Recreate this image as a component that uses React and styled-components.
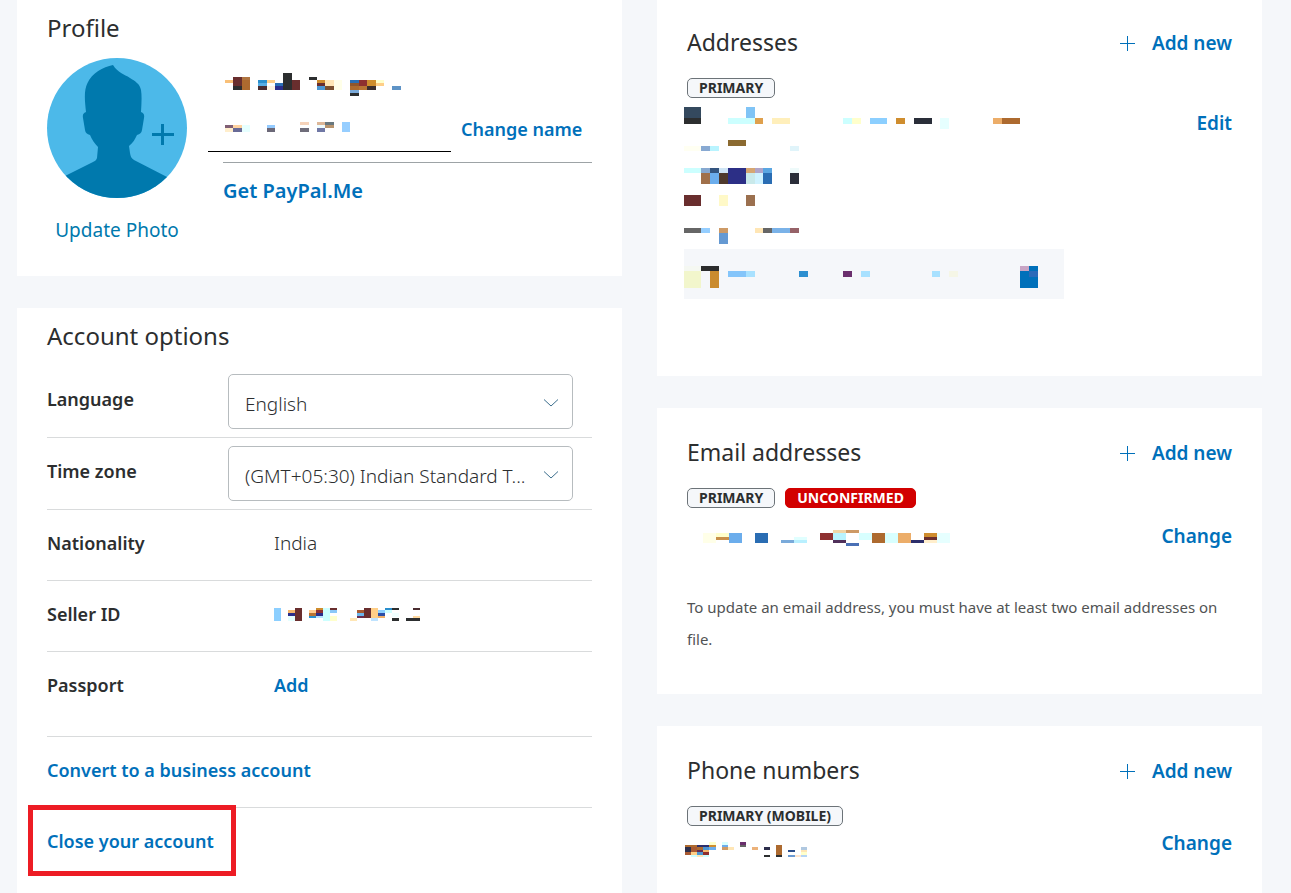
import * as React from "react";
import styled, { createGlobalStyle } from "styled-components";

// Each cell is [x, y, width, height, color]
const nameCells = [
  [0, 7, 8, 3, "#f9c078"],
  [8, 4, 9, 9, "#692e2e"],
  [8, 13, 9, 4, "#2c2e2f"],
  [17, 4, 8, 3, "#b07540"],
  [17, 7, 8, 10, "#ad6a2f"],
  [33, 7, 9, 3, "#2a8fcd"],
  [33, 10, 9, 3, "#58aee4"],
  [33, 13, 9, 4, "#4a2c30"],
  [42, 7, 8, 3, "#ffcf88"],
  [42, 13, 8, 4, "#fff4e2"],
  [50, 10, 8, 3, "#2b6eb5"],
  [50, 13, 8, 4, "#2c2e8b"],
  [58, 0, 9, 17, "#2c2e2f"],
  [67, 7, 8, 10, "#692e2e"],
  [84, 4, 8, 3, "#2c2e2f"],
  [92, 7, 8, 3, "#cf8d2e"],
  [92, 10, 8, 3, "#692e2e"],
  [92, 13, 8, 4, "#4b96d2"],
  [100, 7, 9, 6, "#ffe6b5"],
  [100, 13, 9, 4, "#7a502f"],
  [109, 7, 8, 10, "#ffffe8"],
  [125, 7, 9, 3, "#2a6eb4"],
  [125, 10, 9, 3, "#8e562e"],
  [125, 13, 9, 4, "#ad6a2f"],
  [125, 17, 9, 3, "#7aaada"],
  [125, 20, 9, 3, "#2c2e2f"],
  [134, 7, 8, 6, "#8e2f2f"],
  [134, 13, 8, 4, "#b87333"],
  [142, 7, 9, 6, "#cf8d2e"],
  [142, 13, 9, 4, "#3b2d2e"],
  [151, 7, 8, 3, "#ffffcc"],
  [151, 10, 8, 3, "#ffcf88"],
  [167, 13, 9, 4, "#5e93c6"],
];

const businessCells = [
  [0, 3, 8, 3, "#805f75"],
  [0, 6, 8, 4, "#ffeecc"],
  [8, 3, 9, 3, "#ffd29f"],
  [8, 6, 9, 4, "#686a96"],
  [17, 3, 8, 7, "#e6ffff"],
  [42, 3, 8, 3, "#94cbff"],
  [42, 6, 8, 4, "#6b6878"],
  [75, 0, 9, 3, "#f6d3ba"],
  [75, 6, 9, 4, "#6f6d7a"],
  [92, 0, 8, 3, "#ddb798"],
  [92, 3, 8, 3, "#eefcff"],
  [92, 6, 8, 4, "#7078a5"],
  [100, 0, 9, 3, "#68777e"],
  [100, 3, 9, 3, "#b8946f"],
  [117, 0, 8, 10, "#96ceff"],
];

const sellerCells = [
  [0, 0, 7, 13, "#8ccfff"],
  [14, 2, 7, 3, "#f4b66c"],
  [14, 5, 7, 3, "#2c2e8b"],
  [14, 8, 7, 5, "#e6ffff"],
  [21, 0, 7, 13, "#692e2e"],
  [35, 2, 7, 3, "#ffcc90"],
  [35, 5, 7, 3, "#b87333"],
  [35, 8, 7, 2, "#2a8fcd"],
  [42, 0, 7, 2, "#cf8d2e"],
  [42, 2, 7, 3, "#8e2f2f"],
  [42, 5, 7, 3, "#2c2e8b"],
  [42, 8, 7, 2, "#b5e3ff"],
  [49, 0, 7, 13, "#ccffff"],
  [56, 0, 7, 2, "#692e2e"],
  [56, 2, 7, 3, "#8cc8f8"],
  [56, 8, 7, 5, "#ffffcc"],
  [76, 10, 7, 3, "#ffe6b5"],
  [83, 2, 7, 3, "#a85a32"],
  [83, 5, 7, 3, "#6bb5ec"],
  [83, 8, 7, 2, "#692e4e"],
  [90, 0, 7, 10, "#692e2e"],
  [97, 0, 7, 10, "#ffcf88"],
  [97, 10, 7, 3, "#bfe3ff"],
  [104, 2, 7, 3, "#8ccfff"],
  [104, 5, 7, 3, "#2c4ea6"],
  [104, 8, 7, 2, "#f0b06a"],
  [111, 0, 7, 2, "#2a8fcd"],
  [111, 2, 7, 3, "#cfffff"],
  [118, 0, 7, 2, "#2c2e2f"],
  [118, 5, 7, 4, "#f0ffff"],
  [118, 10, 7, 3, "#2c2e2f"],
  [132, 10, 14, 3, "#2c2e2f"],
  [139, 0, 7, 2, "#4a2c30"],
  [139, 8, 7, 2, "#ffd9a0"],
];

const addressCells = [
  [0, 0, 17, 11, "#34495e"],
  [0, 11, 17, 6, "#2c2e2f"],
  [62, 0, 9, 11, "#80c4f6"],
  [44, 11, 27, 6, "#ccffff"],
  [71, 11, 8, 6, "#dfa04d"],
  [88, 11, 18, 6, "#ffefbb"],
  [159, 11, 9, 6, "#ccffff"],
  [168, 11, 9, 6, "#ffffcc"],
  [186, 11, 17, 6, "#8ccfff"],
  [212, 11, 9, 6, "#cf8d2e"],
  [230, 11, 18, 6, "#2a2e39"],
  [256, 11, 9, 11, "#e6ffff"],
  [309, 11, 9, 6, "#ecad69"],
  [318, 11, 18, 6, "#ad6a2f"],
  [44, 33, 18, 6, "#8b6a31"],
  [0, 39, 17, 5, "#fffff2"],
  [17, 39, 9, 5, "#88a9d2"],
  [26, 39, 9, 5, "#b9f4ff"],
  [106, 39, 9, 5, "#e0f4fa"],
  [0, 61, 17, 5, "#ccffff"],
  [17, 61, 9, 5, "#86a8d0"],
  [26, 61, 9, 5, "#34557f"],
  [35, 61, 9, 5, "#cfe5f5"],
  [44, 61, 18, 16, "#2c2f86"],
  [62, 61, 9, 5, "#d6a672"],
  [71, 61, 8, 5, "#b0a4c8"],
  [79, 61, 9, 5, "#5aa6e2"],
  [106, 61, 9, 5, "#eefafa"],
  [17, 66, 9, 11, "#a0704a"],
  [26, 66, 9, 11, "#6badec"],
  [35, 66, 9, 11, "#4f3a2d"],
  [62, 66, 9, 11, "#c9e9ea"],
  [71, 66, 8, 11, "#cff2ff"],
  [79, 66, 9, 11, "#2a6db3"],
  [106, 66, 9, 11, "#2a2e39"],
  [0, 88, 17, 11, "#692e2e"],
  [35, 88, 9, 11, "#fff9c8"],
  [62, 88, 9, 11, "#9b704f"],
  [0, 121, 17, 5, "#666666"],
  [17, 121, 9, 5, "#95ceff"],
  [35, 121, 9, 5, "#cd9a66"],
  [35, 126, 9, 11, "#6599d2"],
  [71, 121, 8, 5, "#ffe6b5"],
  [79, 121, 9, 5, "#666666"],
  [88, 121, 18, 5, "#7ab2e8"],
  [106, 121, 9, 5, "#966268"],
];

const addressNoteCells = [
  [0, 17, 17, 5, "#f5f8f2"],
  [0, 22, 17, 17, "#f2f6cc"],
  [17, 17, 18, 5, "#2b2c2d"],
  [26, 22, 9, 17, "#ca8b2e"],
  [44, 22, 18, 6, "#84c5fa"],
  [62, 22, 9, 6, "#a8e1ff"],
  [115, 22, 9, 6, "#2d8fd0"],
  [159, 22, 9, 6, "#6a2f6d"],
  [177, 22, 9, 6, "#a8e1ff"],
  [248, 22, 8, 6, "#a8e1ff"],
  [265, 22, 9, 6, "#f5f6e6"],
  [336, 17, 18, 22, "#0070ba"],
  [336, 17, 9, 5, "#c9a5c5"],
  [345, 22, 9, 6, "#2b6ab9"],
];

const emailCells = [
  [0, 3, 13, 10, "#ffffe8"],
  [13, 3, 13, 4, "#ffffcc"],
  [13, 7, 13, 3, "#c8904a"],
  [26, 3, 13, 10, "#6badec"],
  [52, 3, 13, 10, "#2a6db3"],
  [78, 10, 13, 3, "#7aaada"],
  [91, 7, 13, 3, "#e0ffff"],
  [91, 10, 13, 3, "#b9f0ff"],
  [117, 3, 13, 7, "#8e3030"],
  [130, 0, 13, 3, "#f0d6a8"],
  [130, 3, 13, 7, "#b9f4ff"],
  [130, 10, 13, 3, "#50305a"],
  [143, 0, 13, 3, "#cd9a66"],
  [143, 13, 13, 3, "#4a70b5"],
  [156, 3, 13, 7, "#d8ffff"],
  [169, 3, 13, 10, "#ad6a2f"],
  [182, 3, 13, 10, "#d8ffff"],
  [195, 3, 13, 10, "#ecad69"],
  [208, 10, 13, 3, "#2c2e6b"],
  [221, 3, 13, 4, "#cf8d2e"],
  [221, 7, 13, 3, "#692e2e"],
  [221, 10, 13, 3, "#ffeecc"],
  [234, 3, 13, 10, "#e6ffff"],
];

const phoneCells = [
  [0, 3, 12, 2, "#ad6a2f"],
  [0, 5, 6, 5, "#2c2e4b"],
  [6, 5, 6, 5, "#a85a32"],
  [0, 10, 6, 3, "#a85a32"],
  [6, 10, 6, 3, "#ffcf88"],
  [6, 13, 6, 2, "#ccffff"],
  [12, 3, 12, 2, "#2c2e6b"],
  [12, 5, 6, 3, "#ad6a2f"],
  [12, 8, 6, 2, "#692e4e"],
  [12, 10, 6, 3, "#4b96d2"],
  [12, 13, 6, 2, "#ffe6b5"],
  [18, 5, 6, 3, "#4b96d2"],
  [18, 8, 6, 2, "#f4b66c"],
  [18, 10, 6, 3, "#8e2f2f"],
  [18, 13, 6, 2, "#ccffff"],
  [24, 0, 7, 3, "#ffffcc"],
  [24, 3, 7, 2, "#cf8d2e"],
  [24, 5, 7, 3, "#6badec"],
  [37, 0, 6, 3, "#d8ffff"],
  [37, 3, 6, 2, "#6badec"],
  [37, 5, 6, 3, "#cd9a66"],
  [43, 5, 6, 3, "#ffe6b5"],
  [55, 0, 6, 3, "#6a2f6d"],
  [55, 3, 6, 2, "#666666"],
  [67, 5, 6, 3, "#ecb27a"],
  [79, 5, 6, 3, "#2c2e4b"],
  [79, 13, 6, 2, "#2c2e2f"],
  [91, 3, 6, 10, "#ad6a2f"],
  [91, 13, 6, 2, "#2c2e2f"],
  [103, 8, 7, 2, "#2c4e8b"],
  [103, 13, 7, 2, "#6b9ad2"],
  [110, 13, 6, 2, "#ffe6cf"],
  [116, 5, 6, 3, "#b0c8e0"],
  [116, 8, 6, 2, "#ffe6b5"],
  [116, 10, 6, 3, "#ffffcc"],
  [116, 13, 6, 2, "#b5d5f5"],
];

const Mosaic = ({ cells, width, height }) => (
  <MosaicSvg
    width={width}
    height={height}
    viewBox={`0 0 ${width} ${height}`}
    shapeRendering="crispEdges"
    aria-hidden="true"
  >
    {cells.map(([x, y, w, h, fill], i) => (
      <rect key={i} x={x} y={y} width={w} height={h} fill={fill} />
    ))}
  </MosaicSvg>
);

const Avatar = () => (
  <AvatarSvg width="140" height="140" viewBox="0 0 140 140" aria-hidden="true">
    <defs>
      <clipPath id="avatarClip">
        <circle cx="70" cy="70" r="70" />
      </clipPath>
    </defs>
    <circle cx="70" cy="70" r="70" fill="#4cb9e9" />
    <path
      clipPath="url(#avatarClip)"
      fill="#0079ad"
      d="M66 7C56 9 45 15 40.500 25C37 32 37.500 41 39 54C36 55 35.500 57 36 60L38 72C38.500 75 40 76 43 77C45 82 48 86 51 89L50 100C49.500 102 48 103 46 104L18 118V142H122V120L87 102C84 100 83.500 98 83 95L82 88C86 85 88 81 90 77C93 76 94.500 75 95 72L97 60C97.500 57 97 55 94 54C94.500 46 95 38 94 32C93 26 88 23 83 20C77 16 71 15 66 7Z"
    />
    <path d="M105 76.500H127M115.500 66V87" stroke="#0079ad" strokeWidth="3" />
  </AvatarSvg>
);

const AddNew = () => (
  <AddLink href="#add">
    <svg width="15" height="15" viewBox="0 0 15 15" aria-hidden="true">
      <path
        d="M0 7.500H15M7.500 0V15"
        stroke="#0070ba"
        fill="none"
        shapeRendering="crispEdges"
      />
    </svg>
    Add new
  </AddLink>
);

const Dropdown = ({ id, children }) => (
  <SelectWrapper>
    <Select id={id}>{children}</Select>
    <Chevron width="16" height="10" viewBox="0 0 16 10" aria-hidden="true">
      <path d="M1 1.500L8 8L15 1.500" stroke="#3d6f8e" fill="none" />
    </Chevron>
  </SelectWrapper>
);

const App = () => {
  return (
    <>
      <GlobalStyle />
      <Page>
        <Column>
          <Card $bottom={30}>
            <Header>
              <Title>Profile</Title>
            </Header>
            <ProfileBody>
              <PhotoLink href="#photo">
                <Avatar />
                Update Photo
              </PhotoLink>
              <Details>
                <NameRow>
                  <NameField>
                    <Mosaic cells={nameCells} width={176} height={23} />
                    <Mosaic cells={businessCells} width={125} height={10} />
                  </NameField>
                  <NameLink href="#name">Change name</NameLink>
                </NameRow>
                <PayPalMe>
                  <PayPalMeLink href="#paypalme">Get PayPal.Me</PayPalMeLink>
                </PayPalMe>
              </Details>
            </ProfileBody>
          </Card>

          <Card>
            <Header>
              <Title>Account options</Title>
            </Header>
            <Row>
              <Label htmlFor="language">Language</Label>
              <Dropdown id="language">
                <option>English</option>
              </Dropdown>
            </Row>
            <Row>
              <Label htmlFor="timezone">Time zone</Label>
              <Dropdown id="timezone">
                <option>(GMT+05:30) Indian Standard T...</option>
              </Dropdown>
            </Row>
            <Row>
              <Label as="span">Nationality</Label>
              <Value>India</Value>
            </Row>
            <Row>
              <Label as="span">Seller ID</Label>
              <Value>
                <Mosaic cells={sellerCells} width={146} height={13} />
              </Value>
            </Row>
            <Row $tall>
              <Label as="span">Passport</Label>
              <Value>
                <RowLink href="#passport">Add</RowLink>
              </Value>
            </Row>
            <Row>
              <RowLink href="#convert">Convert to a business account</RowLink>
            </Row>
            <Row>
              <CloseLink href="#close">Close your account</CloseLink>
            </Row>
          </Card>
        </Column>

        <Column>
          <Card $bottom={77}>
            <SectionHeader $top={26}>
              <SectionTitle>Addresses</SectionTitle>
              <AddNew />
            </SectionHeader>
            <Badge>PRIMARY</Badge>
            <Entry $top={9}>
              <Address>
                <Mosaic cells={addressCells} width={336} height={142} />
                <AddressNote>
                  <Mosaic cells={addressNoteCells} width={354} height={50} />
                </AddressNote>
              </Address>
              <Link href="#edit">Edit</Link>
            </Entry>
          </Card>

          <Card $bottom={39}>
            <SectionHeader>
              <SectionTitle>Email addresses</SectionTitle>
              <AddNew />
            </SectionHeader>
            <Badges>
              <Badge>PRIMARY</Badge>
              <Badge $alert>UNCONFIRMED</Badge>
            </Badges>
            <Entry $top={12}>
              <EmailValue>
                <Mosaic cells={emailCells} width={247} height={16} />
              </EmailValue>
              <Link href="#email">Change</Link>
            </Entry>
            <Note>
              To update an email address, you must have at least two email
              addresses on file.
            </Note>
          </Card>

          <Card>
            <SectionHeader>
              <SectionTitle>Phone numbers</SectionTitle>
              <AddNew />
            </SectionHeader>
            <Badge>PRIMARY (MOBILE)</Badge>
            <Entry $top={1}>
              <PhoneValue>
                <Mosaic cells={phoneCells} width={122} height={15} />
              </PhoneValue>
              <Link href="#phone">Change</Link>
            </Entry>
          </Card>
        </Column>
      </Page>
    </>
  );
};

const GlobalStyle = createGlobalStyle`
  * {
    box-sizing: border-box;
  }

  body {
    margin: 0;
    background-color: #f5f7fa;
    color: #2c2e2f;
    font-family: "Noto Sans", "Open Sans", sans-serif;
    font-size: 18px;
  }
`;

const Page = styled.main`
  display: grid;
  grid-template-columns: 1fr 1fr;
  column-gap: 35px;
  min-height: 100vh;
  padding: 0 29px 0 17px;
`;

const Column = styled.div`
  display: flex;
  flex-direction: column;
  gap: 32px;
  min-width: 0;
`;

const Card = styled.section`
  padding: 0 30px ${(props) => props.$bottom || 0}px;
  background-color: white;

  &:last-child {
    flex: 1;
  }
`;

const Header = styled.div`
  padding: 12px 0 14px;
`;

const SectionHeader = styled.div`
  display: flex;
  justify-content: space-between;
  align-items: flex-start;
  padding: ${(props) => props.$top || 28}px 0 18px;
`;

const Title = styled.h2`
  margin: 0;
  font-size: 24px;
  font-weight: 400;
  line-height: 32px;
`;

const SectionTitle = styled(Title)`
  font-size: 23px;
`;

const Link = styled.a`
  color: #0070ba;
  font-size: 19px;
  font-weight: 600;
  line-height: 32px;
  text-decoration: none;
`;

const AddLink = styled(Link)`
  display: flex;
  align-items: center;
  gap: 17px;
  line-height: 34px;
`;

const RowLink = styled(Link)`
  font-size: 18px;
`;

const NameLink = styled(Link)`
  margin-bottom: 7px;
  font-size: 18px;
  white-space: nowrap;
`;

const PayPalMeLink = styled(Link)`
  font-size: 20px;
`;

// red frame that draws attention to the link
const CloseLink = styled(RowLink)`
  position: relative;

  &::after {
    content: "";
    position: absolute;
    inset: -20px -22px -19px -19px;
    border: 5px solid #ed1c24;
  }
`;

const ProfileBody = styled.div`
  display: flex;
  gap: 36px;
`;

const PhotoLink = styled.a`
  flex: none;
  color: #0079ad;
  font-size: 19px;
  line-height: 32px;
  text-align: center;
  text-decoration: none;
`;

const AvatarSvg = styled.svg`
  display: block;
  margin-bottom: 16px;
`;

const MosaicSvg = styled.svg`
  display: block;
`;

const Details = styled.div`
  flex: 1;
`;

const NameRow = styled.div`
  display: flex;
  align-items: flex-end;
  gap: 10px;
  margin-left: -15px;
`;

const NameField = styled.div`
  display: flex;
  flex-direction: column;
  gap: 26px;
  width: 243px;
  padding: 15px 0 19px 17px;
  border-bottom: 1px solid black;
`;

const PayPalMe = styled.div`
  margin-top: 10px;
  padding-top: 12px;
  border-top: 1px solid #9da3a6;
`;

const Row = styled.div`
  display: flex;
  align-items: flex-start;
  min-height: ${(props) => (props.$tall ? 85 : 71)}px;
  padding: 8px 0;
  border-bottom: 1px solid #d9dbdc;

  &:last-child {
    border-bottom: none;
  }

  & > a,
  & > span {
    margin-top: 9px;
  }
`;

const Label = styled.label`
  width: 181px;
  margin-top: 9px;
  font-weight: 600;
  line-height: 32px;
`;

const Value = styled.span`
  display: flex;
  align-items: center;
  height: 32px;
  padding-left: 46px;
  font-size: 19px;
  font-weight: 300;
`;

const SelectWrapper = styled.div`
  position: relative;
  flex: 1;
  margin-right: 19px;
`;

const Select = styled.select`
  appearance: none;
  width: 100%;
  height: 55px;
  padding: 4px 32px 0 16px;
  border: 1px solid #b7bcbf;
  border-radius: 5px;
  background-color: white;
  color: inherit;
  font-family: inherit;
  font-size: 19px;
  font-weight: 300;
  text-overflow: ellipsis;
`;

const Chevron = styled.svg`
  position: absolute;
  top: 24px;
  right: 14px;
  pointer-events: none;
`;

const Badges = styled.div`
  display: flex;
  gap: 10px;
`;

const Badge = styled.span`
  display: block;
  width: fit-content;
  padding: 0 11px;
  border: 1px solid ${(props) => (props.$alert ? "#d20000" : "#6c7378")};
  border-radius: 5px;
  background-color: ${(props) => (props.$alert ? "#d20000" : "#f5f7fa")};
  color: ${(props) => (props.$alert ? "white" : "#2c2e2f")};
  font-size: 14px;
  font-weight: 700;
  line-height: 18px;
`;

const Entry = styled.div`
  display: flex;
  justify-content: space-between;
  align-items: flex-start;
  margin-top: ${(props) => props.$top}px;
`;

const Address = styled.div`
  width: 380px;
  margin-left: -3px;
`;

const AddressNote = styled.div`
  background-color: #f5f7fa;
`;

const EmailValue = styled.div`
  padding: 10px 0 0 16px;
`;

const PhoneValue = styled.div`
  padding-top: 15px;
  margin-left: -2px;
`;

const Note = styled.p`
  margin: 39px 0 0;
  color: #515354;
  font-size: 15px;
  line-height: 32px;
`;

export default App;
